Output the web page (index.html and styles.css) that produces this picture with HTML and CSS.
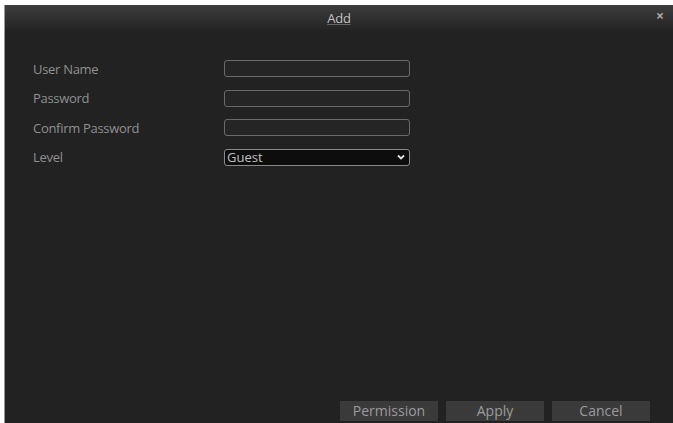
FILE: index.html
```html
<!DOCTYPE html>
<html>
<head>
<meta charset="utf-8">
<link rel="stylesheet" href="styles.css">
</head>
<body>
<div class="dialog">
  <div class="titlebar">
    <span class="title">Add</span>
    <span class="close">×</span>
  </div>
  <div class="content">
    <div class="form">
      <div class="row"><label class="label">User Name</label><div class="field"></div></div>
      <div class="row"><label class="label">Password</label><div class="field"></div></div>
      <div class="row"><label class="label">Confirm Password</label><div class="field"></div></div>
      <div class="row"><label class="label">Level</label>
        <div class="field select"><span class="value">Guest</span>
          <svg class="chev" width="8" height="6" viewBox="0 0 8 6"><path d="M1 1.5 L4 4.5 L7 1.5" fill="none" stroke="#e0e0e0" stroke-width="1.8"/></svg>
        </div>
      </div>
    </div>
    <div class="buttons">
      <div class="btn">Permission</div>
      <div class="btn">Apply</div>
      <div class="btn">Cancel</div>
    </div>
  </div>
</div>
</body>
</html>
```
FILE: styles.css
```css
html, body {
  margin: 0;
  padding: 0;
  background: #ffffff;
  width: 673px;
  height: 423px;
  overflow: hidden;
}
body {
  font-family: "Open Sans", "Liberation Sans", sans-serif;
}
.dialog {
  margin: 5px 0 0 4px;
  width: 669px;
  height: 418px;
  display: flex;
  flex-direction: column;
  background: #222222;
  border-left: 1px solid #9a9a9a;
  box-sizing: border-box;
}
.titlebar {
  height: 25px;
  flex: none;
  display: flex;
  align-items: center;
  justify-content: center;
  position: relative;
  background: linear-gradient(#3d3d3d, #2f2f2f 55%, #242424);
}
.title {
  color: #c4c4c4;
  font-size: 13px;
  letter-spacing: -0.2px;
  text-decoration: underline;
  text-decoration-color: #666;
}
.close {
  position: absolute;
  right: 9px;
  top: 1px;
  color: #a8a8a8;
  font-size: 14px;
  font-weight: bold;
}
.content {
  flex: 1;
  display: flex;
  flex-direction: column;
  justify-content: space-between;
  padding: 30px 0 2px 28px;
}
.form {
  display: flex;
  flex-direction: column;
  gap: 12px;
}
.row {
  display: flex;
  align-items: center;
  height: 17.5px;
}
.label {
  width: 191px;
  color: #909090;
  font-size: 13px;
  letter-spacing: -0.3px;
}
.field {
  width: 186px;
  height: 17px;
  box-sizing: border-box;
  border: 1px solid #6a6a6a;
  border-radius: 3px;
  background: #252525;
}
.select {
  background: #0d0d0d;
  border-color: #8a8a8a;
  display: flex;
  align-items: center;
  justify-content: space-between;
  padding: 0 4px 0 2px;
}
.value {
  color: #c0c0c0;
  font-size: 13px;
  line-height: 15px;
}
.chev {
  display: block;
}
.buttons {
  display: flex;
  gap: 8px;
  padding-left: 307px;
}
.btn {
  width: 98px;
  height: 20px;
  background: #3a3a3a;
  color: #9c9c9c;
  font-size: 14px;
  line-height: 20px;
  text-align: center;
}
```
